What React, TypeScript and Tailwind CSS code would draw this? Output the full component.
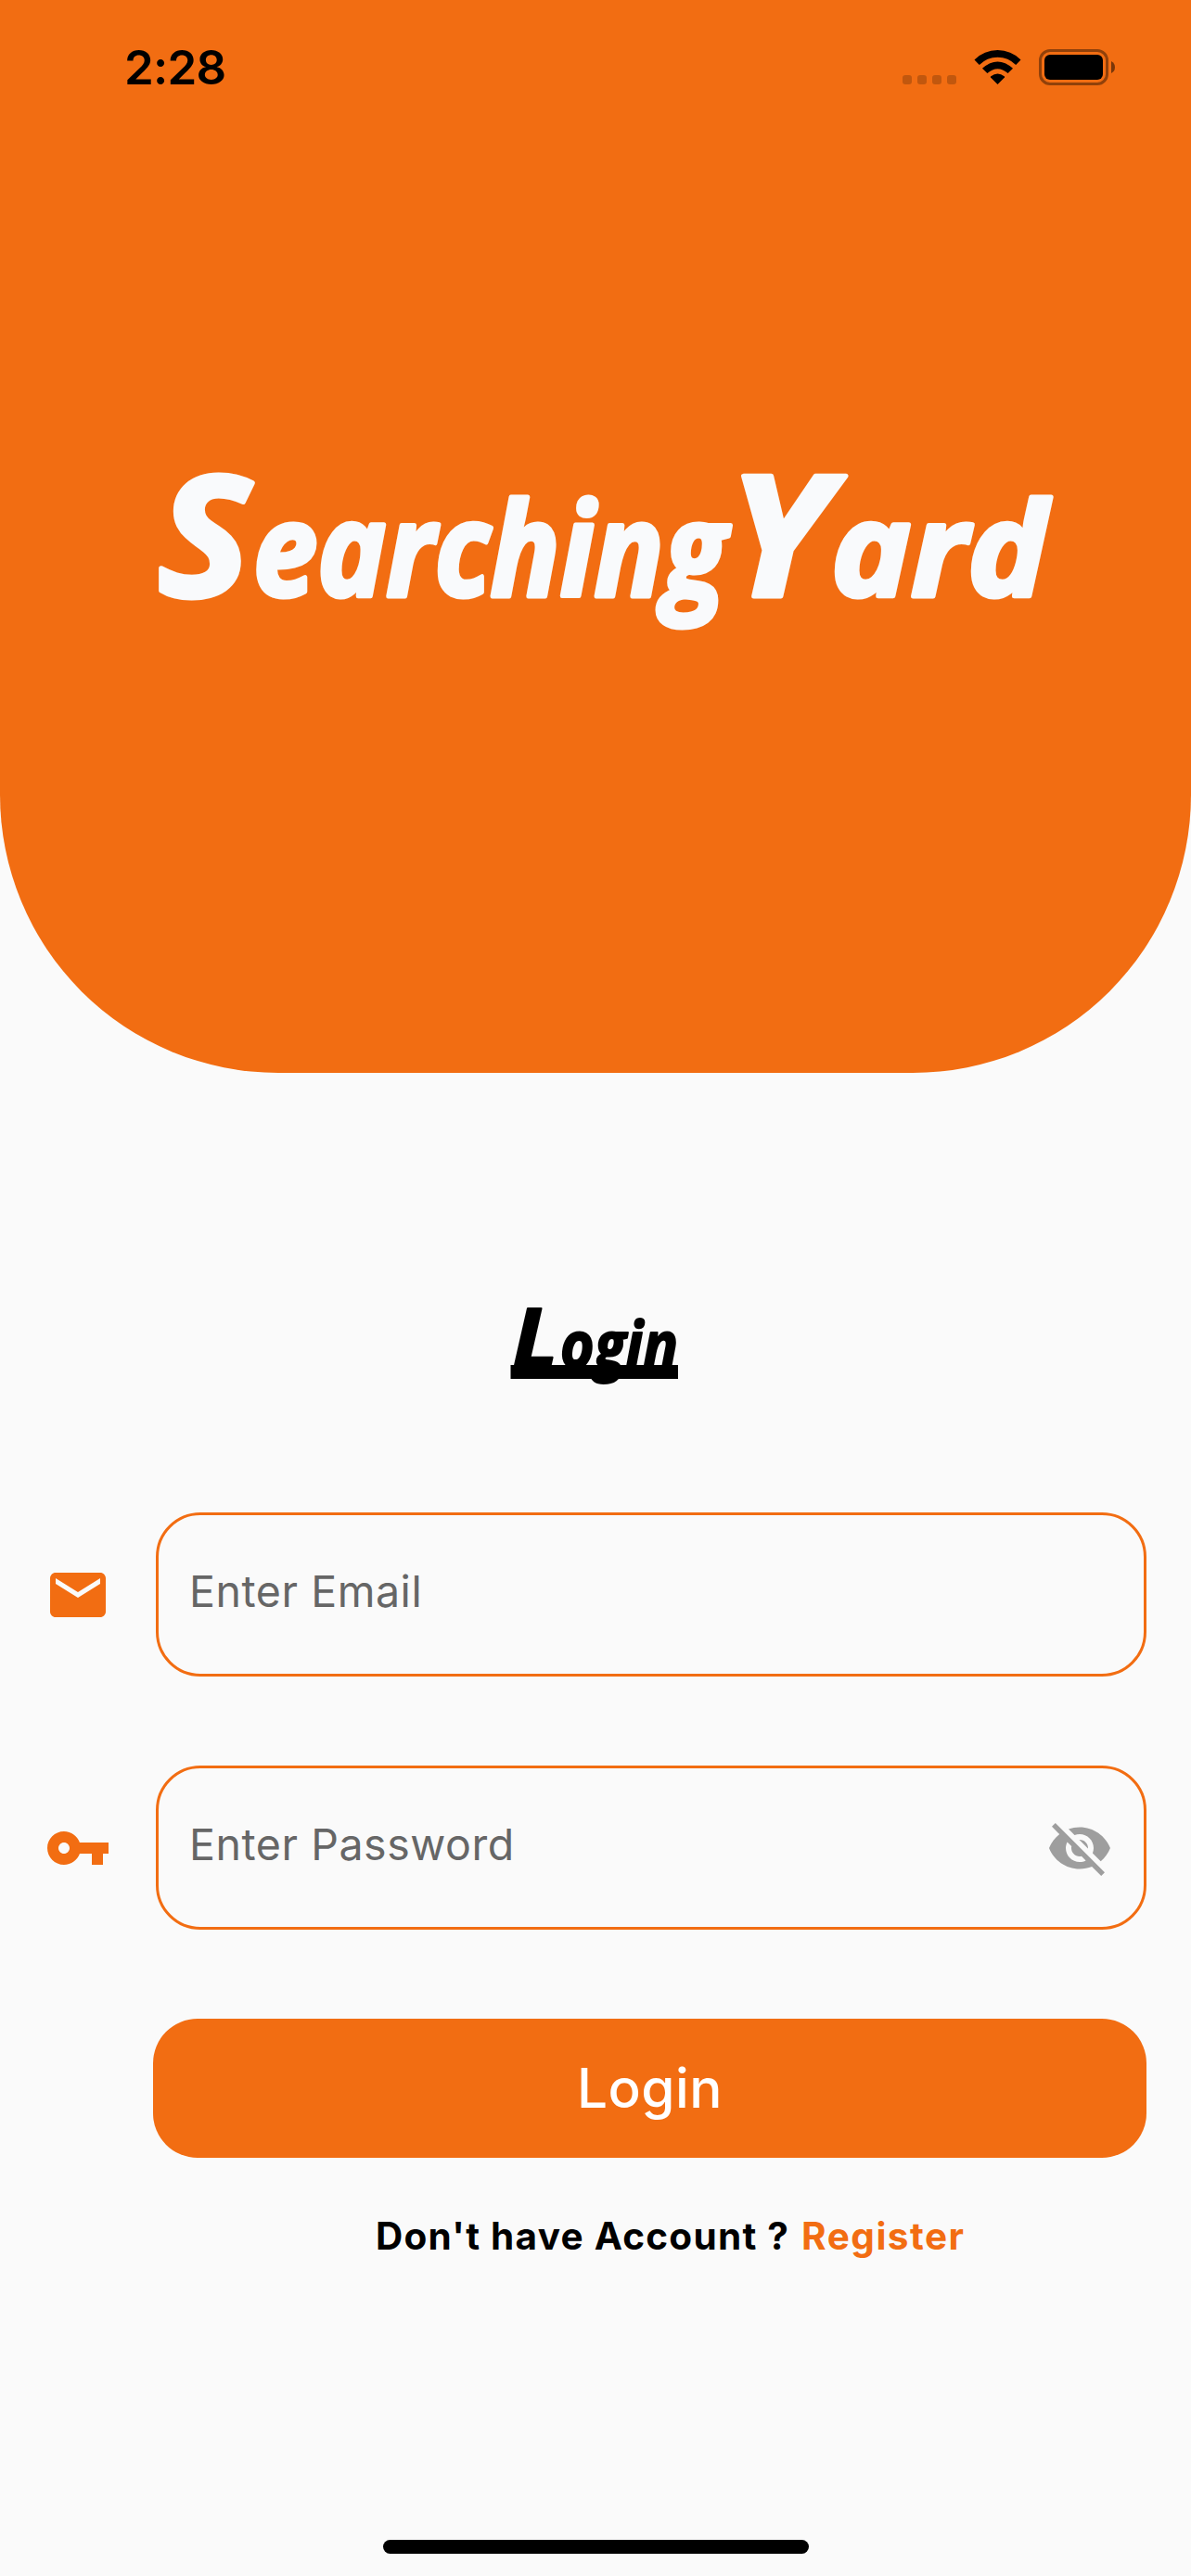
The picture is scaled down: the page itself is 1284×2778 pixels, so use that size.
import React from "react";

type Run = { text: string; x: number; length: number; size: number };

function ScriptText({ runs, y, strokeWidth }: { runs: Run[]; y: number; strokeWidth: number }) {
  return (
    <text
      y={y}
      fill="currentColor"
      stroke="currentColor"
      strokeWidth={strokeWidth}
      strokeLinejoin="round"
      fontFamily="'Open Sans', 'Noto Sans', sans-serif"
      fontStyle="italic"
      fontWeight="700"
    >
      {runs.map((run) => (
        <tspan key={run.text} x={run.x} fontSize={run.size} textLength={run.length} lengthAdjust="spacingAndGlyphs">
          {run.text}
        </tspan>
      ))}
    </text>
  );
}

const WORDMARK: Run[] = [
  { text: "S", x: 170, length: 100, size: 182 },
  { text: "earching", x: 273, length: 510, size: 140 },
  { text: "Y", x: 784, length: 110, size: 182 },
  { text: "ard", x: 896, length: 233, size: 140 },
];

const LOGIN: Run[] = [
  { text: "L", x: 552, length: 50, size: 89 },
  { text: "ogin", x: 604, length: 127, size: 70 },
];

function StatusBar() {
  return (
    <div className="flex h-[144px] items-start justify-between pl-[134px] pr-[81px]">
      <span className="mt-[43px] text-[51px] font-semibold leading-[60px] tracking-[-0.8px] text-black">2:28</span>
      <svg width="230" height="40" viewBox="973 53 230 40" className="mt-[53px] block">
        <g fill="#000" fillOpacity=".2">
          <rect x="973" y="81" width="10" height="10" rx="3" />
          <rect x="989" y="81" width="10" height="10" rx="3" />
          <rect x="1005" y="81" width="10" height="10" rx="3" />
          <rect x="1021" y="81" width="10" height="10" rx="3" />
        </g>
        <path d="M1075.500 91L1068 83.500Q1067.600 82.800 1068.300 82.200Q1075.500 77 1082.700 82.200Q1083.400 82.800 1083 83.500Z" />
        <path d="M1059 73.800Q1075.500 59.200 1092 73.800L1086.600 79Q1075.500 69.500 1064.400 79Z" />
        <path d="M1050.500 64.500Q1061 54 1075.500 54Q1090 54 1100.500 64.500L1095.200 70Q1087 61.700 1075.500 61.700Q1064 61.700 1055.800 70Z" />
        <rect x="1121.500" y="54.500" width="72" height="36" rx="10.500" fill="none" stroke="#000" strokeOpacity=".4" strokeWidth="3" />
        <rect x="1126" y="59" width="63" height="27" rx="6" />
        <path d="M1198 66Q1202 68 1202 72.500Q1202 77 1198 79Z" fillOpacity=".5" />
      </svg>
    </div>
  );
}

function MailIcon() {
  return (
    <svg width="72" height="72" viewBox="0 0 24 24" fill="#f26d12" className="block">
      <path d="M20 4H4c-1.100 0-1.990.900-1.990 2L2 18c0 1.100.900 2 2 2h16c1.100 0 2-.900 2-2V6c0-1.100-.900-2-2-2zm0 4l-8 5-8-5V6l8 5 8-5v2z" />
    </svg>
  );
}

function KeyIcon() {
  return (
    <svg width="72" height="72" viewBox="0 0 24 24" fill="#f26d12" className="block">
      <path d="M12.650 10C11.830 7.670 9.610 6 7 6c-3.310 0-6 2.690-6 6s2.690 6 6 6c2.610 0 4.830-1.670 5.650-4H17v4h4v-4h2v-4H12.650zM7 14c-1.100 0-2-.900-2-2s.900-2 2-2 2 .900 2 2-.900 2-2 2z" />
    </svg>
  );
}

function EyeOffIcon() {
  return (
    <svg width="72" height="72" viewBox="0 0 24 24" fill="#9e9e9e" className="block">
      <path d="M12 7c2.760 0 5 2.240 5 5 0 .650-.130 1.260-.360 1.830l2.920 2.920c1.510-1.260 2.700-2.890 3.430-4.750-1.730-4.390-6-7.500-11-7.500-1.400 0-2.740.250-3.980.700l2.160 2.160C10.740 7.130 11.350 7 12 7zM2 4.270l2.280 2.280.460.460C3.080 8.300 1.780 10.020 1 12c1.730 4.390 6 7.500 11 7.500 1.550 0 3.030-.300 4.380-.840l.420.420L19.730 22 21 20.730 3.270 3 2 4.270zM7.530 9.800l1.550 1.550c-.050.210-.080.430-.080.650 0 1.660 1.340 3 3 3 .220 0 .440-.030.650-.080l1.550 1.550c-.670.330-1.410.530-2.200.530-2.760 0-5-2.240-5-5 0-.790.200-1.530.530-2.200zm4.310-.780l3.150 3.150.020-.160c0-1.660-1.340-3-3-3l-.170.010z" />
    </svg>
  );
}

function Field({ icon, label, trailing }: { icon: React.ReactNode; label: string; trailing?: React.ReactNode }) {
  return (
    <div className="flex h-[177px] items-center px-12">
      <div className="mr-12 pt-px">{icon}</div>
      <div className="flex h-full flex-1 items-center justify-between rounded-[48px] border-[3px] border-[#f26d12] px-[33px]">
        <span className="pb-[7px] text-[46.5px] leading-[60px] tracking-[0.55px] text-[#666666]">{label}</span>
        {trailing && <div className="pt-px">{trailing}</div>}
      </div>
    </div>
  );
}

export default function App() {
  return (
    <div className="flex h-[2778px] w-[1284px] flex-col overflow-hidden bg-[#fafafa] font-['Inter',sans-serif]">
      <header className="h-[1157px] shrink-0 rounded-b-[300px] bg-[#f26d12]">
        <StatusBar />
        <h1 className="mt-[306px] text-[#f9fafc]">
          <svg width="1284" height="300" viewBox="0 450 1284 300" className="block overflow-visible">
            <ScriptText runs={WORDMARK} y={643} strokeWidth={5} />
          </svg>
        </h1>
      </header>

      <main className="flex flex-col">
        <h2 className="mt-[233px] flex h-[140px] pl-[530px] text-black">
          <svg width="220" height="140" viewBox="530 1390 220 140" className="block overflow-visible">
            <ScriptText runs={LOGIN} y={1475} strokeWidth={2} />
            <rect x="550.500" y="1472" width="180.500" height="15" />
          </svg>
        </h2>

        <div className="mt-[101px] flex flex-col gap-24">
          <Field icon={<MailIcon />} label="Enter Email" />
          <Field icon={<KeyIcon />} label="Enter Password" trailing={<EyeOffIcon />} />
        </div>

        <button className="ml-[165px] mr-12 mt-24 flex h-[150px] items-center justify-center rounded-[48px] bg-[#f26d12] text-[58.5px] font-medium leading-[72px] tracking-[0.5px] text-white">
          Login
        </button>

        <p className="ml-[405px] mt-[55px] whitespace-nowrap text-[40.5px] font-bold leading-[60px] tracking-[1.25px] text-black">
          Don't have Account ? <a className="ml-[2px] tracking-[1.5px] text-[#f26d12]">Register</a>
        </p>
      </main>

      <div className="mb-6 ml-[413px] mt-auto h-[15px] w-[459px] rounded-full bg-black" />
    </div>
  );
}
